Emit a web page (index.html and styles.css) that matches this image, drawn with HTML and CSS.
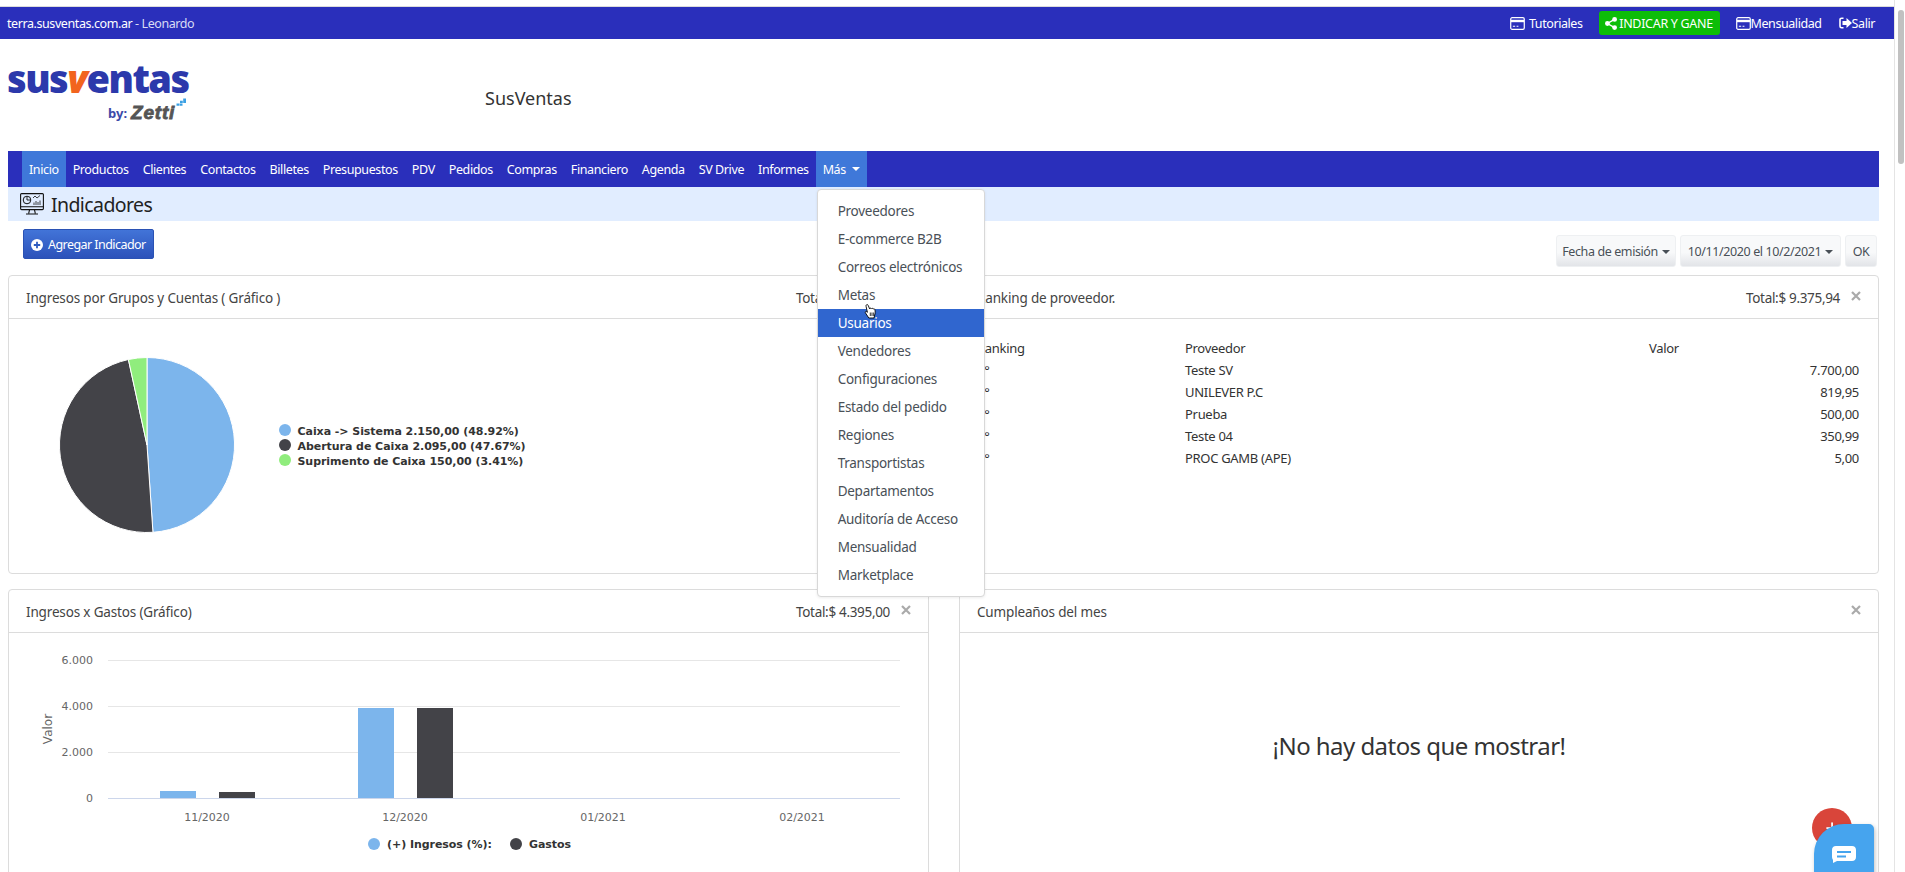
FILE: index.html
```html
<!DOCTYPE html>
<html lang="es">
<head>
<meta charset="utf-8">
<title>SusVentas - Indicadores</title>
<link rel="stylesheet" href="styles.css">
</head>
<body>
<div class="page">
  <div class="main">
    <header class="topbar">
      <span class="tenant">terra.susventas.com.ar <span class="dim">- Leonardo</span></span>
      <nav class="toplinks">
        <a class="toplink tut"><svg class="ico" viewBox="0 0 16 14"><rect x=".7" y=".7" width="14.6" height="12.6" rx="1.5" fill="none" stroke="#fff" stroke-width="1.3"/><rect x="1" y="3" width="14" height="2.6" fill="#fff"/><path d="M3 10h2.5M7 10h2" stroke="#fff" stroke-width="1.2"/></svg>Tutoriales</a>
        <a class="green"><svg class="share" viewBox="0 0 12 13"><circle cx="9.6" cy="2.4" r="2.4" fill="#fff"/><circle cx="2.4" cy="6.5" r="2.4" fill="#fff"/><circle cx="9.6" cy="10.6" r="2.4" fill="#fff"/><path d="M9.6 2.4 2.4 6.5l7.2 4.1" stroke="#fff" stroke-width="1.4" fill="none"/></svg>INDICAR Y GANE</a>
        <a class="toplink men"><svg class="ico" viewBox="0 0 16 14"><rect x=".7" y=".7" width="14.6" height="12.6" rx="1.5" fill="none" stroke="#fff" stroke-width="1.3"/><rect x="1" y="3" width="14" height="2.6" fill="#fff"/><path d="M3 10h2.5M7 10h2" stroke="#fff" stroke-width="1.2"/></svg>Mensualidad</a>
        <a class="toplink sal"><svg class="ico-out" viewBox="0 0 13 12"><path d="M4.5 1.2H2.6C1.6 1.2 1 1.9 1 2.8v6.4c0 .9.6 1.6 1.6 1.6h1.9" fill="none" stroke="#fff" stroke-width="1.6"/><path d="M7.5 1 13 6l-5.500 5V8H3.500V4h4z" fill="#fff"/></svg>Salir</a>
      </nav>
    </header>

    <div class="brandrow">
      <div class="logo">
        <div class="logo-word">sus<span class="logo-v">v</span>entas</div>
        <div class="logo-by"><span>by:</span><span class="zetti">Zetti</span>
          <svg class="dots" viewBox="0 0 11 9"><path d="M5 2.800h2.800v2.300H5zM8.200 .4h2.800v2.300H8.200zM8.200 2.800h2.800v2.300H8.200zM1.500 5.400h2.800v2.300H1.500zM4.700 5.400h2.800v2.300H4.700z" fill="#3aa0e4"/></svg>
        </div>
      </div>
      <div class="brandname">SusVentas</div>
    </div>

    <div class="content">
      <nav class="mainnav">
        <a class="navitem active">Inicio</a>
        <a class="navitem">Productos</a>
        <a class="navitem">Clientes</a>
        <a class="navitem">Contactos</a>
        <a class="navitem">Billetes</a>
        <a class="navitem">Presupuestos</a>
        <a class="navitem">PDV</a>
        <a class="navitem">Pedidos</a>
        <a class="navitem">Compras</a>
        <a class="navitem">Financiero</a>
        <a class="navitem">Agenda</a>
        <a class="navitem">SV Drive</a>
        <a class="navitem">Informes</a>
        <div class="more">
          <a class="navitem active moreitem">Más <i class="caret"></i></a>
          <ul class="dropdown">
            <li>Proveedores</li>
            <li>E-commerce B2B</li>
            <li>Correos electrónicos</li>
            <li>Metas</li>
            <li class="hover">Usuarios</li>
            <li>Vendedores</li>
            <li>Configuraciones</li>
            <li>Estado del pedido</li>
            <li>Regiones</li>
            <li>Transportistas</li>
            <li>Departamentos</li>
            <li>Auditoría de Acceso</li>
            <li>Mensualidad</li>
            <li>Marketplace</li>
          </ul>
          <svg class="cursor" viewBox="0 0 14 16"><path d="M3.500 1.300c.8-.6 1.500 0 1.800.8l1.300 3.300c.2-1 1.500-1 1.800 0 .3-.8 1.500-.8 1.800.2.400-.6 1.500-.4 1.700.5.400 1.600.500 3.800-.2 5.400l-.7 3H5.800L2.600 9.600c-.7-.9-.3-1.900.8-1.500l1 .7L3.100 3c-.2-.7-.1-1.300.4-1.700z" fill="#fff" stroke="#000" stroke-width=".9"/><path d="M7.300 9v3.500M9 9v3.500M10.700 9v3.500" stroke="#000" stroke-width=".8"/></svg>
        </div>
      </nav>

      <div class="subhead">
        <svg class="monitor" viewBox="0 0 24 22"><rect x=".6" y=".6" width="22.800" height="16" rx="1" fill="none" stroke="#111" stroke-width="1.100"/><path d="M.6 13.800h22.800M9.500 16.800l-.8 3.600M14.500 16.800l.8 3.600M6 21h12" stroke="#111" stroke-width="1.100" fill="none"/><circle cx="7" cy="7" r="3.800" fill="none" stroke="#111"/><path d="M7 4v3h3" fill="none" stroke="#111" stroke-width=".9"/><path d="M13 5l2-2 2 2 3-2.500M14 12V9.500M16 12V8M18 12V9M20 12V7.500" fill="none" stroke="#111" stroke-width=".8"/></svg>
        <h1 class="subtitle">Indicadores</h1>
      </div>

      <div class="toolbar">
        <button class="addbtn"><svg class="plus" viewBox="0 0 12 12"><circle cx="6" cy="6" r="6" fill="#fff"/><path d="M6 2.800v6.400M2.800 6h6.400" stroke="#2f5cc0" stroke-width="1.800"/></svg>Agregar Indicador</button>
        <div class="filters">
          <button class="filter f1">Fecha de emisión <i class="caret dark"></i></button>
          <button class="filter f2">10/11/2020 el 10/2/2021 <i class="caret dark"></i></button>
          <button class="filter f3">OK</button>
        </div>
      </div>

      <div class="grid">
        <section class="card first">
          <div class="card-head"><span class="card-title">Ingresos por Grupos y Cuentas ( Gráfico )</span><span class="card-total">Total:$ 4.395,00<svg class="close" viewBox="0 0 10 10"><path d="M1 1l8 8M9 1l-8 8"/></svg></span></div>
          <svg class="chart pie" viewBox="0 0 919 254">
            <path d="M138 126V38.500A87.500 87.500 0 0 1 143.950 213.300Z" fill="#7cb5ec" stroke="#fff"/>
            <path d="M138 126L143.950 213.300A87.500 87.500 0 0 1 119.400 40.500Z" fill="#434348" stroke="#fff"/>
            <path d="M138 126L119.400 40.500A87.500 87.500 0 0 1 138 38.500Z" fill="#90ed7d" stroke="#fff"/>
            <circle cx="276" cy="111" r="6" fill="#7cb5ec"/><text class="leg" x="288.500" y="115.500">Caixa -&gt; Sistema 2.150,00 (48.92%)</text>
            <circle cx="276" cy="126" r="6" fill="#434348"/><text class="leg" x="288.500" y="130.500">Abertura de Caixa 2.095,00 (47.67%)</text>
            <circle cx="276" cy="141" r="6" fill="#90ed7d"/><text class="leg" x="288.500" y="145.500">Suprimento de Caixa 150,00 (3.41%)</text>
          </svg>
        </section>

        <section class="card first">
          <div class="card-head"><span class="card-title">Ranking de proveedor.</span><span class="card-total">Total:$ 9.375,94<svg class="close" viewBox="0 0 10 10"><path d="M1 1l8 8M9 1l-8 8"/></svg></span></div>
          <div class="tablewrap">
            <table class="rank">
              <thead><tr><th class="c1">Ranking</th><th class="c2">Proveedor</th><th class="c3">Valor</th></tr></thead>
              <tbody>
                <tr><td>1°</td><td>Teste SV</td><td class="num">7.700,00</td></tr>
                <tr><td>2°</td><td>UNILEVER P.C</td><td class="num">819,95</td></tr>
                <tr><td>3°</td><td>Prueba</td><td class="num">500,00</td></tr>
                <tr><td>4°</td><td>Teste 04</td><td class="num">350,99</td></tr>
                <tr><td>5°</td><td>PROC GAMB (APE)</td><td class="num">5,00</td></tr>
              </tbody>
            </table>
          </div>
        </section>

        <section class="card">
          <div class="card-head"><span class="card-title">Ingresos x Gastos (Gráfico)</span><span class="card-total">Total:$ 4.395,00<svg class="close" viewBox="0 0 10 10"><path d="M1 1l8 8M9 1l-8 8"/></svg></span></div>
          <svg class="chart bars" viewBox="0 0 919 239">
            <path d="M99 27.500H891M99 73.500H891M99 119.500H891" stroke="#e6e6e6"/>
            <path d="M99 165.500H891" stroke="#ccd6eb"/>
            <text class="axis" x="84" y="31" text-anchor="end">6.000</text>
            <text class="axis" x="84" y="77" text-anchor="end">4.000</text>
            <text class="axis" x="84" y="123" text-anchor="end">2.000</text>
            <text class="axis" x="84" y="169" text-anchor="end">0</text>
            <text class="axis-title" transform="translate(43 96) rotate(-90)" text-anchor="middle">Valor</text>
            <rect x="151" y="158" width="36" height="7" fill="#7cb5ec"/>
            <rect x="210" y="159" width="36" height="6" fill="#434348"/>
            <rect x="349" y="75" width="36" height="90" fill="#7cb5ec"/>
            <rect x="408" y="75" width="36" height="90" fill="#434348"/>
            <text class="axis" x="198" y="188" text-anchor="middle">11/2020</text>
            <text class="axis" x="396" y="188" text-anchor="middle">12/2020</text>
            <text class="axis" x="594" y="188" text-anchor="middle">01/2021</text>
            <text class="axis" x="793" y="188" text-anchor="middle">02/2021</text>
            <circle cx="365" cy="211" r="6" fill="#7cb5ec"/><text class="leg" x="378" y="215">(+) Ingresos (%):</text>
            <circle cx="507" cy="211" r="6" fill="#434348"/><text class="leg" x="520" y="215">Gastos</text>
          </svg>
        </section>

        <section class="card">
          <div class="card-head"><span class="card-title">Cumpleaños del mes</span><span class="card-total"><svg class="close" viewBox="0 0 10 10"><path d="M1 1l8 8M9 1l-8 8"/></svg></span></div>
          <p class="nodata">¡No hay datos que mostrar!</p>
        </section>
      </div>
    </div>
  </div>
  <aside class="rail"><div class="thumb"></div></aside>
</div>
<div class="fab-red">+</div>
<div class="fab-chat"><svg class="chat-ico" viewBox="0 0 24 17"><path d="M4 0h16c2.500 0 4 1.500 4 4v7c0 2.500-1.500 4-4 4H5l-4 2 .0-3C.4 13 0 12 0 11V4C0 1.500 1.500 0 4 0z" fill="#fff"/><path d="M5 6h14M5 10.500h9" stroke="#46a4ee" stroke-width="1.800"/></svg></div>
</body>
</html>
```

FILE: styles.css
```css
* { box-sizing: border-box; }
html, body { margin: 0; height: 872px; overflow: hidden; background: #fff; }
body { font-family: "Noto Sans", "Open Sans", sans-serif; font-size: 13px; color: #333; }
a { color: inherit; text-decoration: none; }

.page { display: flex; height: 872px; overflow: hidden; }
.main { flex: 1; min-width: 0; padding-top: 6px; }
.rail { width: 11px; border-left: 1px solid #e4e4e4; padding: 10px 1px 0 3px; background: #fff; }
.thumb { height: 154px; background: #c1c1c1; border-radius: 4px; }

.topbar { height: 33px; border-top: 1px solid #dcdcdc; background: #2a2fbb; color: #fff; display: flex; justify-content: space-between; align-items: center; padding: 0 19px 0 7px; font-size: 12.500px; letter-spacing: -.42px; }
.dim { color: #d8dbf5; }
.toplinks { display: flex; align-items: center; }
.toplink { display: flex; align-items: center; }
.tut { gap: 4px; margin-right: 16px; }
.men { margin-left: 16px; }
.sal { margin-left: 17px; }
.ico { width: 15px; height: 13px; }
.ico-out { width: 13px; height: 12px; }
.green { height: 24px; width: 121px; background: #0dbd08; border-radius: 3px; display: flex; align-items: center; justify-content: center; gap: 2px; letter-spacing: -.3px; }
.share { width: 12px; height: 13px; }

.brandrow { height: 112px; display: flex; }
.logo { width: 478px; margin-left: 7px; position: relative; }
.logo-word { margin-top: 21px; font-family: "Open Sans", sans-serif; font-weight: 800; font-size: 38px; line-height: 36px; letter-spacing: -1.5px; color: #2c39ab; }
.logo-v { color: #f2641e; font-style: italic; }
.logo-by { position: absolute; left: 101px; top: 66px; display: flex; align-items: center; gap: 4px; font-size: 13px; line-height: 16px; font-weight: 700; color: #3c4aa8; }
.zetti { font-family: "Liberation Sans", sans-serif; font-style: italic; font-weight: 700; font-size: 19px; line-height: 16px; color: #555; letter-spacing: .8px; -webkit-text-stroke: .8px #555; }
.dots { position: absolute; left: 67px; top: -7px; width: 11px; height: 9px; }
.brandname { font-size: 18px; line-height: 24px; margin-top: 47px; color: #333; }

.content { margin: 0 15px 0 8px; }
.mainnav { height: 36px; background: #2a2fbb; color: #fff; display: flex; padding-left: 14px; font-size: 12.500px; letter-spacing: -.39px; }
.navitem { display: flex; align-items: center; padding: 0 7px; height: 36px; }
.active { background: #3f78d9; }
.more { position: relative; }
.moreitem { gap: 6px; width: 51px; }
.caret { display: inline-block; border-top: 4px solid #fff; border-left: 4px solid transparent; border-right: 4px solid transparent; }
.caret.dark { border-top-color: #495057; margin-left: 1px; vertical-align: 2px; }
.dropdown { position: absolute; z-index: 5; left: 1px; top: 38px; width: 168px; height: 408px; margin: 0; padding: 7px 0; list-style: none; background: #fff; border: 1px solid #d8d8d8; border-radius: 4px; box-shadow: 0 1px 3px rgba(0,0,0,.08); color: #495057; font-size: 13.500px; letter-spacing: -.26px; }
.dropdown li { height: 28px; line-height: 29px; padding-left: 20px; }
.dropdown .hover { background: #3066cf; color: #fff; }
.cursor { position: absolute; z-index: 6; left: 47px; top: 152px; width: 14px; height: 17px; }

.subhead { height: 34px; background: #e1edff; display: flex; align-items: center; padding-left: 12px; gap: 7px; }
.monitor { width: 24px; height: 22px; }
.subtitle { margin: 1px 0 0; font-size: 19.500px; font-weight: 400; letter-spacing: -.6px; color: #222; }

.toolbar { height: 54px; display: flex; justify-content: space-between; align-items: flex-start; padding: 8px 2px 0 15px; }
.addbtn { width: 131px; height: 30px; border: 1px solid #2a52b4; border-radius: 2px; background: linear-gradient(#4274d8, #2c52ba); color: #fff; font: inherit; font-size: 12.500px; letter-spacing: -.55px; display: flex; align-items: center; gap: 5px; padding: 1px 0 0 7px; }
.plus { width: 12px; height: 12px; }
.filters { display: flex; gap: 4px; margin-top: 6px; }
.filter { height: 32px; border: 1px solid #eef0f2; border-radius: 3px; background: linear-gradient(#f8f9fa 55%, #e2e4e8); color: #495057; font: inherit; font-size: 12.500px; letter-spacing: -.4px; padding: 1px 0 0; }
.f1 { width: 120px; }
.f2 { width: 161px; }
.f3 { width: 32px; }

.grid { display: grid; grid-template-columns: 921px 920px; column-gap: 30px; row-gap: 15px; grid-template-rows: 299px 300px; }
.card { border: 1px solid #dcdcdc; border-radius: 4px; background: #fff; }
.card-head { height: 43px; border-bottom: 1px solid #dcdcdc; display: flex; justify-content: space-between; align-items: center; padding: 1px 17px 0 17px; font-size: 13.500px; letter-spacing: -.32px; color: #444; }
.card-title { letter-spacing: -.16px; }
.card-total { display: flex; align-items: center; gap: 11px; }
.close { width: 10px; height: 10px; margin-top: -3px; fill: none; stroke: #aaa; stroke-width: 2.200; }
.chart { display: block; width: 919px; }
.pie { height: 254px; }
.bars { height: 239px; }
.leg { font-family: "DejaVu Sans", sans-serif; font-size: 11px; font-weight: 700; fill: #333; letter-spacing: -.05px; }
.axis { font-family: "DejaVu Sans", sans-serif; font-size: 11px; fill: #666; }
.axis-title { font-family: "DejaVu Sans", sans-serif; font-size: 12px; fill: #666; }

.tablewrap { padding: 18px 19px 0 17px; }
.rank { width: 100%; border-collapse: collapse; font-size: 13px; letter-spacing: -.3px; color: #333; }
.rank th { font-weight: 400; text-align: left; }
.rank th, .rank td { height: 22px; padding: 0; }
.c1 { width: 208px; }
.c2 { width: 464px; }
.num { text-align: right; }

.nodata { margin: 98px 0 0; text-align: center; font-size: 24px; line-height: 30px; letter-spacing: -.55px; color: #333; }

.fab-red { position: fixed; z-index: 8; left: 1812px; top: 808px; width: 40px; height: 40px; border-radius: 50%; background: #d9453a; color: #fff; font-size: 24px; line-height: 40px; text-align: center; }
.fab-chat { position: fixed; z-index: 9; left: 1814px; top: 824px; width: 60px; height: 72px; background: #46a4ee; border-radius: 30px 5px 26px 26px; box-shadow: 1px 2px 4px rgba(0,0,0,.25); display: flex; justify-content: center; padding-top: 22px; }
.chat-ico { width: 24px; height: 17px; }
```
